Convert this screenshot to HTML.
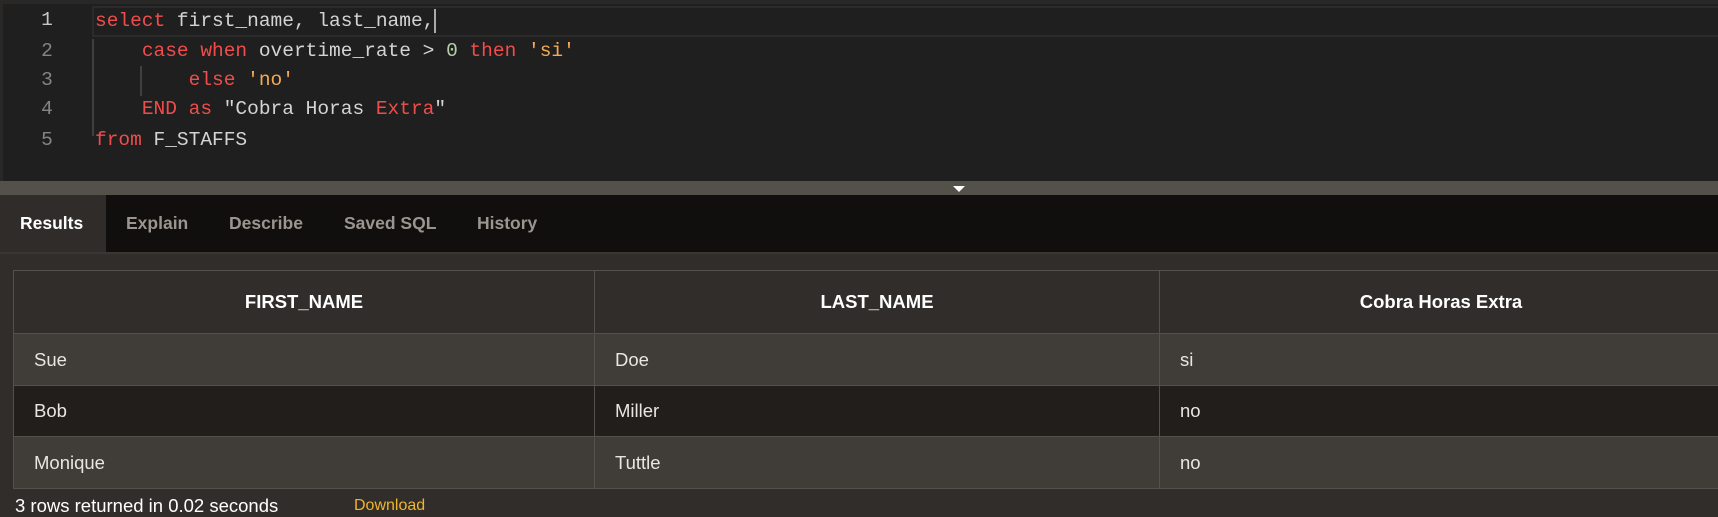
<!DOCTYPE html>
<html><head><meta charset="utf-8"><style>
*{margin:0;padding:0;box-sizing:border-box}
body{width:1718px;height:513px;overflow:hidden;background:#312d2a;font-family:"Liberation Sans",sans-serif;position:relative}
#ed{position:absolute;left:0;top:0;width:1718px;height:181px;background:#1f1f1f;border-top:4px solid #2a2826;border-left:3px solid #2a2826}
.ln{position:absolute;left:0;width:88px;text-align:center;font:19.5px "Liberation Mono",monospace;color:#858585}
.cd{position:absolute;left:92px;font:19.5px "Liberation Mono",monospace;color:#d4d4d4;white-space:pre}
.k{color:#f14c4c}.s{color:#f4a956}.n{color:#b5cea8}
#split{position:absolute;left:0;top:181px;width:1718px;height:14px;background:#54504a}
#tabs{position:absolute;left:0;top:195px;width:1718px;height:59px;background:#100f0d;border-bottom:2px solid #3a3632}
.tab{position:absolute;top:0;height:57px;line-height:57px;font-weight:bold;font-size:17.5px;color:#9a9590}
#tbl{position:absolute;left:13px;top:270px;width:1710px;border-collapse:collapse}
#tbl td,#tbl th{border:1px solid #55504a;font-size:18.5px;color:#e8e6e3;text-align:left;padding-left:20px}
#tbl th{height:63px;text-align:center;padding:0;color:#fff;background:#312d2a;font-size:18.5px}
</style></head><body>
<div id="ed">
<div style="position:absolute;left:89px;top:2px;width:1640px;height:31px;border:2px solid #2b2b2b"></div>
<div style="position:absolute;left:89px;top:35px;width:2px;height:97px;background:#404040"></div>
<div style="position:absolute;left:137px;top:62px;width:2px;height:30px;background:#404040"></div>
<div class="ln" style="top:5px;color:#c6c6c6">1</div>
<div class="ln" style="top:36px">2</div>
<div class="ln" style="top:65px">3</div>
<div class="ln" style="top:94px">4</div>
<div class="ln" style="top:125px">5</div>
<div class="cd" style="top:5px"><span class="k">select</span> first_name, last_name,<span style="display:inline-block;width:2px;height:24px;background:#aaa;vertical-align:middle"></span></div>
<div class="cd" style="top:36px">    <span class="k">case</span> <span class="k">when</span> overtime_rate &gt; <span class="n">0</span> <span class="k">then</span> <span class="s">'si'</span></div>
<div class="cd" style="top:65px">        <span class="k">else</span> <span class="s">'no'</span></div>
<div class="cd" style="top:94px">    <span class="k">END</span> <span class="k">as</span> "Cobra Horas <span class="k">Extra</span>"</div>
<div class="cd" style="top:125px"><span class="k">from</span> F_STAFFS</div>
</div>
<div id="split"><div style="position:absolute;left:953px;top:5px;width:0;height:0;border-left:6px solid transparent;border-right:6px solid transparent;border-top:6px solid #fff"></div></div>
<div id="tabs">
<div class="tab" style="left:0;width:106px;background:#302c29;color:#fff;padding-left:20px">Results</div>
<div class="tab" style="left:126px">Explain</div>
<div class="tab" style="left:229px">Describe</div>
<div class="tab" style="left:344px">Saved SQL</div>
<div class="tab" style="left:477px">History</div>
</div>
<table id="tbl">
<tr><th style="width:581px">FIRST_NAME</th><th style="width:565px">LAST_NAME</th><th>Cobra Horas Extra</th></tr>
<tr style="background:#403c37;height:52px"><td>Sue</td><td>Doe</td><td>si</td></tr>
<tr style="background:#211e1c;height:51px"><td>Bob</td><td>Miller</td><td>no</td></tr>
<tr style="background:#403c37;height:52px"><td>Monique</td><td>Tuttle</td><td>no</td></tr>
</table>
<div style="position:absolute;left:15px;top:495px;font-size:18.5px;color:#fff">3 rows returned in 0.02 seconds</div>
<div style="position:absolute;left:354px;top:497px;font-size:16px;color:#f0b429">Download</div>
</body></html>
